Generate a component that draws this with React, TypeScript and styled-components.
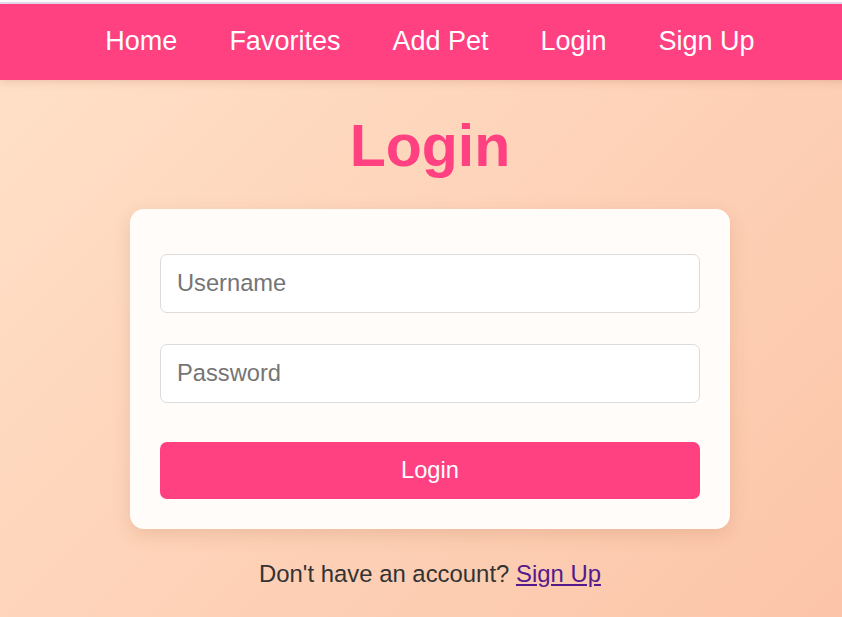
import React from 'react';
import styled, { createGlobalStyle } from 'styled-components';

const GlobalStyle = createGlobalStyle`
  html, body {
    margin: 0;
    padding: 0;
    overflow: hidden;
  }
  body {
    font-family: "Liberation Sans", Arial, sans-serif;
    background: linear-gradient(135deg, #ffe1c8 0%, #fcc5a9 100%);
    min-height: 100vh;
  }
`;

const Page = styled.div`
  width: 860px;
  min-height: 617px;
  display: flex;
  flex-direction: column;
  align-items: center;
`;

const TopEdge = styled.div`
  width: 100%;
  height: 2px;
  background: #ffffff;
  border-bottom: 2px solid #e6def0;
`;

const Navbar = styled.nav`
  width: 100%;
  height: 76px;
  background: #ff4081;
  box-shadow: 0 2px 8px rgba(120, 40, 20, 0.15);
  display: flex;
  justify-content: center;
  align-items: center;
  gap: 52px;
`;

const NavLink = styled.a`
  color: #ffffff;
  font-size: 27px;
  text-decoration: none;
  padding-bottom: 1px;
`;

const Title = styled.h1`
  margin: 32px 0 29px;
  font-size: 59px;
  font-weight: bold;
  color: #ff4081;
  line-height: 68px;
`;

const Card = styled.div`
  width: 600px;
  box-sizing: border-box;
  padding: 45px 30px 30px;
  background: #fffcfa;
  border-radius: 14px;
  box-shadow: 0 6px 18px rgba(150, 80, 40, 0.16);
`;

const Form = styled.form`
  display: flex;
  flex-direction: column;
`;

const Input = styled.input`
  height: 59px;
  box-sizing: border-box;
  padding: 0 16px;
  border: 1px solid #dcdcdc;
  border-radius: 7px;
  background: #ffffff;
  font-family: "Liberation Sans", Arial, sans-serif;
  font-size: 23.7px;
  color: #333;
  outline: none;

  & + & {
    margin-top: 31px;
  }

  &::placeholder {
    color: #757575;
  }
`;

const SubmitButton = styled.button`
  margin-top: 39px;
  height: 57px;
  border: none;
  border-radius: 7px;
  background: #ff4081;
  color: #ffffff;
  font-family: "Liberation Sans", Arial, sans-serif;
  font-size: 23.7px;
  cursor: pointer;
`;

const Footer = styled.p`
  margin: 31px 0 0;
  font-size: 23.9px;
  color: #333333;
`;

const FooterLink = styled.a`
  color: #551a8b;
  text-decoration: underline;
`;

const navItems = ['Home', 'Favorites', 'Add Pet', 'Login', 'Sign Up'];

export default function App() {
  return (
    <>
      <GlobalStyle />
      <Page>
        <TopEdge />
        <Navbar>
          {navItems.map((item) => (
            <NavLink key={item} href="#">
              {item}
            </NavLink>
          ))}
        </Navbar>
        <Title>Login</Title>
        <Card>
          <Form onSubmit={(e) => e.preventDefault()}>
            <Input type="text" placeholder="Username" />
            <Input type="password" placeholder="Password" />
            <SubmitButton type="submit">Login</SubmitButton>
          </Form>
        </Card>
        <Footer>
          Don't have an account? <FooterLink href="#">Sign Up</FooterLink>
        </Footer>
      </Page>
    </>
  );
}
